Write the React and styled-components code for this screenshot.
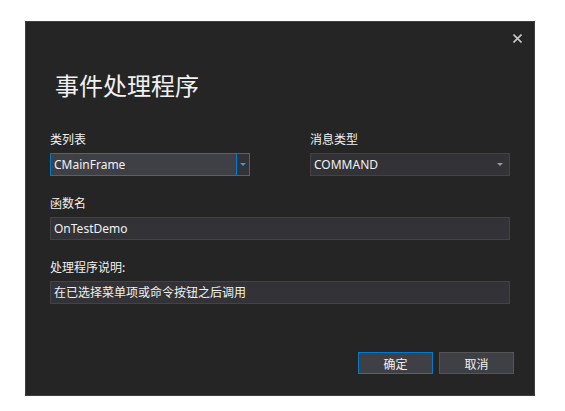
import React from 'react';
import styled, { createGlobalStyle } from 'styled-components';

const GlobalStyle = createGlobalStyle`
    body {
        margin: 0;
        background: #ffffff;
        font-family: "Noto Sans", "Noto Sans CJK SC", sans-serif;
    }
`;

const Page = styled.div`
    padding: 21px 0 0 25px;
`;

const Dialog = styled.div`
    box-sizing: border-box;
    display: flex;
    flex-direction: column;
    width: 510px;
    height: 375px;
    background: #252526;
    border: 1px solid #3f3f41;
    color: #f1f1f1;
`;

const Header = styled.div`
    display: flex;
    justify-content: flex-end;
    padding: 11px 11px 0 0;
`;

const CloseButton = styled.button`
    display: flex;
    align-items: center;
    justify-content: center;
    width: 12px;
    height: 10px;
    padding: 0;
    border: none;
    background: transparent;
    color: #c8c8c8;
`;

const Body = styled.div`
    display: flex;
    flex-direction: column;
    padding: 0 24px;
`;

const Title = styled.h1`
    margin: 26px 0 0 5px;
    font-family: "Noto Sans CJK SC", sans-serif;
    font-size: 24px;
    font-weight: 400;
    line-height: 32px;
    color: #f1f1f1;
`;

const Row = styled.div`
    display: grid;
    grid-template-columns: 200px 200px;
    justify-content: space-between;
    margin-top: ${p => p.$gap}px;
`;

const Field = styled.div`
    display: flex;
    flex-direction: column;
    gap: 6px;
    margin-top: ${p => p.$gap || 0}px;
`;

const Label = styled.span`
    font-family: "Noto Sans CJK SC", sans-serif;
    font-size: 12px;
    line-height: 16px;
    color: #f1f1f1;
`;

const Combo = styled.div`
    box-sizing: border-box;
    display: flex;
    height: 23px;
    background: ${p => (p.$focused ? '#3f3f46' : '#333337')};
    border: 1px solid ${p => (p.$focused ? '#007acc' : '#434346')};
`;

const ComboValue = styled.span`
    flex: 1;
    padding-left: 3px;
    font-size: 12px;
    line-height: 21px;
    color: #f1f1f1;
`;

const ComboArrow = styled.span`
    display: flex;
    align-items: center;
    justify-content: center;
    width: 12px;
    background: ${p => (p.$focused ? '#333337' : 'transparent')};
    border-left: 1px solid ${p => (p.$focused ? '#007acc' : 'transparent')};
    margin-right: ${p => (p.$focused ? 0 : 3)}px;
    color: ${p => (p.$focused ? '#3399ff' : '#999999')};
`;

const TextBox = styled.div`
    box-sizing: border-box;
    height: 23px;
    padding-left: 3px;
    background: #333337;
    border: 1px solid #434346;
    font-family: "Noto Sans", "Noto Sans CJK SC", sans-serif;
    font-size: 12px;
    line-height: 21px;
    color: #f1f1f1;
`;

const Footer = styled.div`
    display: flex;
    justify-content: flex-end;
    gap: 6px;
    margin-top: auto;
    padding: 0 20px 21px 0;
`;

const Button = styled.button`
    box-sizing: border-box;
    width: 75px;
    height: 22px;
    padding: 0;
    background: #3f3f46;
    border: 1px solid ${p => (p.$primary ? '#007acc' : '#555555')};
    font-family: "Noto Sans CJK SC", sans-serif;
    font-size: 12px;
    color: #f1f1f1;
`;

const Arrow = () => (
    <svg width="6" height="3" viewBox="0 0 6 3">
        <path d="M0 0 L6 0 L3 3 Z" fill="currentColor" />
    </svg>
);

export default function App() {
    return (
        <Page>
            <GlobalStyle />
            <Dialog>
                <Header>
                    <CloseButton>
                        <svg width="9" height="9" viewBox="0 0 9 9">
                            <path d="M0.5 0.5 L8.5 8.5 M8.5 0.5 L0.5 8.5" stroke="currentColor" strokeWidth="1.6" />
                        </svg>
                    </CloseButton>
                </Header>
                <Body>
                    <Title>事件处理程序</Title>
                    <Row $gap={30}>
                        <Field>
                            <Label>类列表</Label>
                            <Combo $focused>
                                <ComboValue>CMainFrame</ComboValue>
                                <ComboArrow $focused><Arrow /></ComboArrow>
                            </Combo>
                        </Field>
                        <Field>
                            <Label>消息类型</Label>
                            <Combo>
                                <ComboValue>COMMAND</ComboValue>
                                <ComboArrow><Arrow /></ComboArrow>
                            </Combo>
                        </Field>
                    </Row>
                    <Field $gap={19}>
                        <Label>函数名</Label>
                        <TextBox>OnTestDemo</TextBox>
                    </Field>
                    <Field $gap={19}>
                        <Label>处理程序说明:</Label>
                        <TextBox>在已选择菜单项或命令按钮之后调用</TextBox>
                    </Field>
                </Body>
                <Footer>
                    <Button $primary>确定</Button>
                    <Button>取消</Button>
                </Footer>
            </Dialog>
        </Page>
    );
}
